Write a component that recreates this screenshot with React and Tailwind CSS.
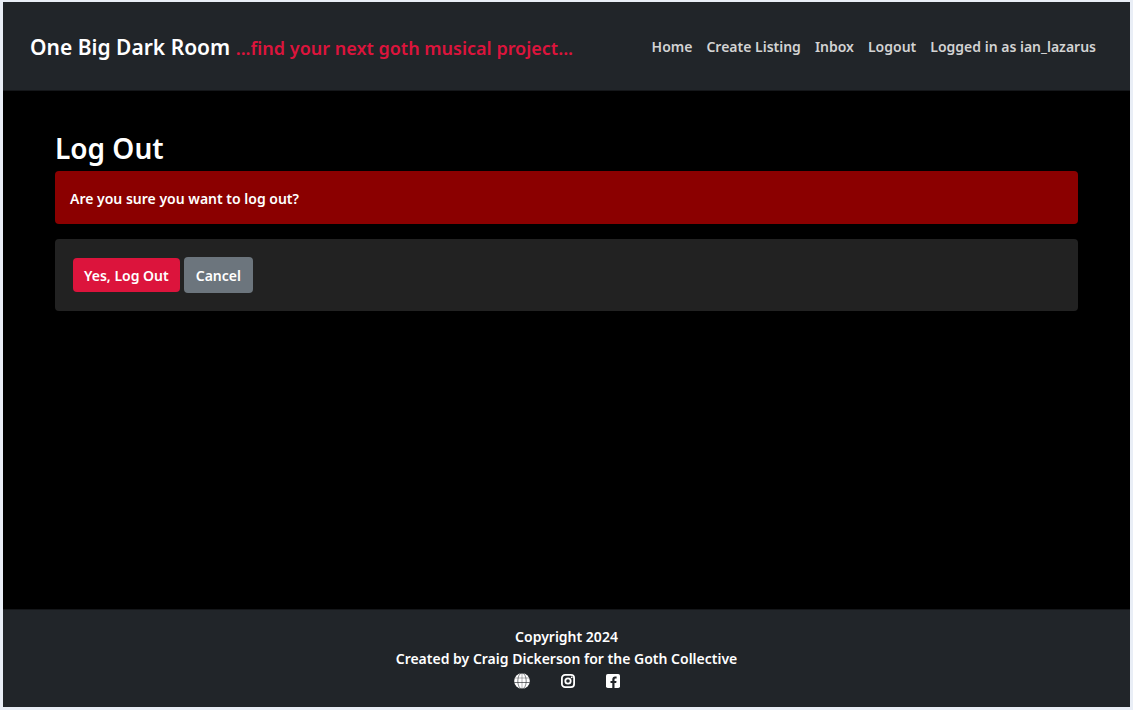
const navLinks = ["Home", "Create Listing", "Inbox", "Logout", "Logged in as ian_lazarus"];

function GlobeIcon() {
  return (
    <svg viewBox="0 0 16 16" className="size-4" aria-hidden="true">
      <circle cx="8" cy="8" r="7.8" fill="#fff" />
      <g fill="none" stroke="#212529" strokeWidth="0.7">
        <path d="M8 0v16M1 5h14" strokeOpacity="0.5" />
        <path d="M0.3 9.5h15.4" strokeOpacity="0.9" />
        <ellipse cx="8" cy="8" rx="4.2" ry="8" strokeOpacity="0.8" />
      </g>
    </svg>
  );
}

function InstagramIcon() {
  return (
    <svg viewBox="0 0 14 14" className="size-3.5" fill="none" stroke="#fff" aria-hidden="true">
      <rect x="0.9" y="0.9" width="12.2" height="12.2" rx="3.2" strokeWidth="1.8" />
      <circle cx="7" cy="7" r="2.7" strokeWidth="1.8" />
      <circle cx="10.7" cy="3.3" r="0.9" fill="#fff" stroke="none" />
    </svg>
  );
}

function FacebookIcon() {
  return (
    <svg viewBox="0 0 14 14" className="size-3.5" aria-hidden="true">
      <rect width="14" height="14" rx="1.8" fill="#fff" />
      <path
        d="M6.3 14V9.1H4.5V7h1.8V5.5C6.3 3.6 7.4 2.6 9.1 2.6c.8 0 1.500.1 1.500.1v1.800h-.9c-.9 0-1.200.5-1.200 1.100V7h2l-.3 2.100H8.500V14z"
        fill="#212529"
      />
    </svg>
  );
}

const socialLinks = [
  { label: "Website", Icon: GlobeIcon },
  { label: "Instagram", Icon: InstagramIcon },
  { label: "Facebook", Icon: FacebookIcon },
];

function Header() {
  return (
    <header className="flex h-[89px] items-center justify-between border-b border-[#15171a] bg-[#212529] pl-[27px] pr-[34px]">
      <a href="#home" className="whitespace-nowrap pt-1 text-[21px] text-white">
        One Big Dark Room{" "}
        <span className="text-[18px] text-[#dc143c]">...find your next goth musical project...</span>
      </a>
      <nav className="flex gap-[14px] whitespace-nowrap text-[#d3d3d3]">
        {navLinks.map((label) => (
          <a key={label} href="#nav">
            {label}
          </a>
        ))}
      </nav>
    </header>
  );
}

function Footer() {
  return (
    <footer className="flex h-[98px] flex-col items-center border-t border-[#15171a] bg-[#212529] pt-4 leading-[22px] text-white">
      <p>Copyright 2024</p>
      <p>Created by Craig Dickerson for the Goth Collective</p>
      <ul className="flex h-[22px] items-center gap-[31px]">
        {socialLinks.map(({ label, Icon }) => (
          <li key={label}>
            <a href="#social" aria-label={label} className="block">
              <Icon />
            </a>
          </li>
        ))}
      </ul>
    </footer>
  );
}

export default function App() {
  return (
    <div className="flex min-h-screen flex-col bg-[#e9eef6] px-[3px] pb-[3px] pt-[2px] font-['Noto_Sans',sans-serif] text-[14px] font-semibold">
      <Header />
      <main className="flex-1 bg-black px-[52px] pt-[39px]">
        <h1 className="mb-[5px] text-[28px] leading-[36px] text-white">Log Out</h1>
        <p className="mb-[15px] rounded bg-[#8b0000] px-[15px] pb-[14px] pt-4 leading-[23px] text-white">
          Are you sure you want to log out?
        </p>
        <form className="flex items-center gap-1 rounded bg-[#222222] p-[18px]">
          <button type="button" className="h-[34px] rounded bg-[#dc143c] px-[11px] text-white">
            Yes, Log Out
          </button>
          <button type="button" className="h-[36px] rounded bg-[#6c757d] px-3 text-white">
            Cancel
          </button>
        </form>
      </main>
      <Footer />
    </div>
  );
}
